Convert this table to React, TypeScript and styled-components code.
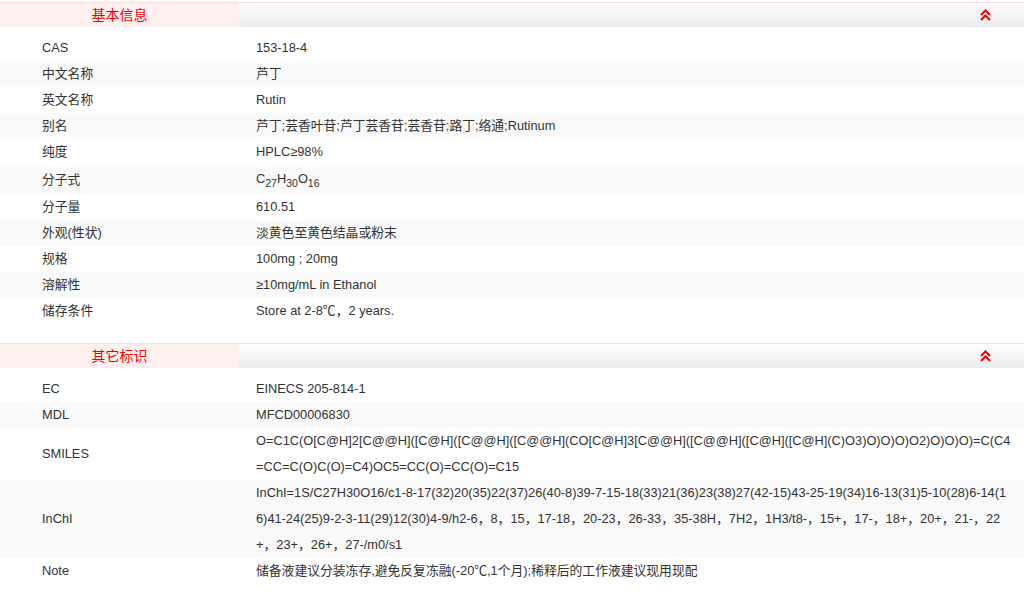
import React from "react";
import styled, { createGlobalStyle } from "styled-components";

const GlobalStyle = createGlobalStyle`
  body {
    margin: 0;
    background: #ffffff;
    font-family: "Liberation Sans", Arial, "Noto Sans CJK SC", sans-serif;
    font-size: 12.8px;
    color: #333333;
  }
`;

const Page = styled.div`
  width: 1024px;
  padding-top: 2px;
`;

const Section = styled.section`
  margin-bottom: 19px;
`;

const Header = styled.div`
  display: flex;
  height: 24px;
  border-top: 1px solid #fbdede;
`;

const HeaderTitle = styled.div`
  width: 239px;
  background: #fff0f0;
  color: #f40000;
  font-size: 14px;
  line-height: 24px;
  text-align: center;
`;

const HeaderFill = styled.div`
  flex: 1;
  display: flex;
  align-items: center;
  justify-content: flex-end;
  padding-right: 33px;
  background: linear-gradient(#fefefe, #ebebeb);
`;

const Table = styled.div`
  margin-top: 8px;
`;

const Row = styled.div<{ $striped: boolean }>`
  display: grid;
  grid-template-columns: 214px 1fr;
  align-items: center;
  padding-left: 42px;
  padding-right: 10px;
  line-height: 26px;
  background: ${(p) => (p.$striped ? "#f9f9f9" : "#ffffff")};
`;

const Label = styled.div``;

const Value = styled.div`
  word-break: break-all;
`;

const Formula = styled.span`
  display: inline-block;
  line-height: 27px;
  padding-bottom: 2px;
`;

const Sub = styled.sub`
  font-size: 10.5px;
  line-height: 0;
`;

const CollapseIcon = () => (
  <svg width="11" height="12" viewBox="0 0 11 12" fill="none">
    <path d="M1 6 L5.5 1.5 L10 6" stroke="#f40000" strokeWidth="2" />
    <path d="M1 11 L5.5 6.5 L10 11" stroke="#f40000" strokeWidth="2" />
  </svg>
);

type Item = { label: string; value: React.ReactNode };

const basic: Item[] = [
  { label: "CAS", value: "153-18-4" },
  { label: "中文名称", value: "芦丁" },
  { label: "英文名称", value: "Rutin" },
  { label: "别名", value: "芦丁;芸香叶苷;芦丁芸香苷;芸香苷;路丁;络通;Rutinum" },
  { label: "纯度", value: "HPLC≥98%" },
  {
    label: "分子式",
    value: (
      <Formula>
        C<Sub>27</Sub>H<Sub>30</Sub>O<Sub>16</Sub>
      </Formula>
    ),
  },
  { label: "分子量", value: "610.51" },
  { label: "外观(性状)", value: "淡黄色至黄色结晶或粉末" },
  { label: "规格", value: "100mg ; 20mg" },
  { label: "溶解性", value: "≥10mg/mL in Ethanol" },
  { label: "储存条件", value: "Store at 2-8℃，2 years." },
];

const other: Item[] = [
  { label: "EC", value: "EINECS 205-814-1" },
  { label: "MDL", value: "MFCD00006830" },
  {
    label: "SMILES",
    value:
      "O=C1C(O[C@H]2[C@@H]([C@H]([C@@H]([C@@H](CO[C@H]3[C@@H]([C@@H]([C@H]([C@H](C)O3)O)O)O)O2)O)O)O)=C(C4=CC=C(O)C(O)=C4)OC5=CC(O)=CC(O)=C15",
  },
  {
    label: "InChI",
    value:
      "InChI=1S/C27H30O16/c1-8-17(32)20(35)22(37)26(40-8)39-7-15-18(33)21(36)23(38)27(42-15)43-25-19(34)16-13(31)5-10(28)6-14(16)41-24(25)9-2-3-11(29)12(30)4-9/h2-6，8，15，17-18，20-23，26-33，35-38H，7H2，1H3/t8-，15+，17-，18+，20+，21-，22+，23+，26+，27-/m0/s1",
  },
  { label: "Note", value: "储备液建议分装冻存,避免反复冻融(-20℃,1个月);稀释后的工作液建议现用现配" },
];

const InfoSection = ({ title, items }: { title: string; items: Item[] }) => (
  <Section>
    <Header>
      <HeaderTitle>{title}</HeaderTitle>
      <HeaderFill>
        <CollapseIcon />
      </HeaderFill>
    </Header>
    <Table>
      {items.map((item, i) => (
        <Row key={item.label} $striped={i % 2 === 1}>
          <Label>{item.label}</Label>
          <Value>{item.value}</Value>
        </Row>
      ))}
    </Table>
  </Section>
);

export default function App() {
  return (
    <Page>
      <GlobalStyle />
      <InfoSection title="基本信息" items={basic} />
      <InfoSection title="其它标识" items={other} />
    </Page>
  );
}
